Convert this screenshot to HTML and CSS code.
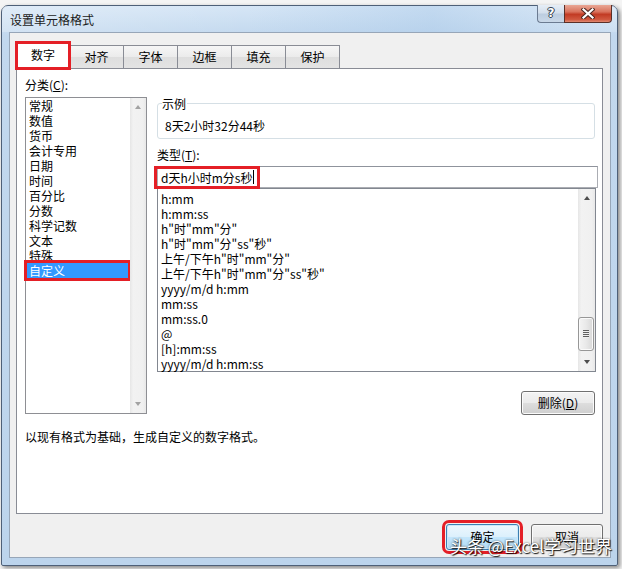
FILE: index.html
```html
<!DOCTYPE html>
<html lang="zh-CN">
<head>
<meta charset="utf-8">
<title>设置单元格格式</title>
<link rel="stylesheet" href="styles.css">
</head>
<body>
<div class="window">
  <div class="titlebar">
    <span class="title">设置单元格格式</span>
    <div class="caption-btns">
      <div class="btn-help">?</div>
      <div class="btn-close">
        <svg width="14" height="11" viewBox="0 0 14 11">
          <path d="M2.5 1.5 L11.5 9.5 M11.5 1.5 L2.5 9.5" stroke="#4a2620" stroke-width="4.2" stroke-linecap="square" fill="none"/>
          <path d="M2.5 1.5 L11.5 9.5 M11.5 1.5 L2.5 9.5" stroke="#ffffff" stroke-width="2.2" stroke-linecap="square" fill="none"/>
        </svg>
      </div>
    </div>
  </div>
  <div class="client">
    <div class="tabs">
      <div class="tab active">数字</div>
      <div class="tab">对齐</div>
      <div class="tab">字体</div>
      <div class="tab">边框</div>
      <div class="tab">填充</div>
      <div class="tab">保护</div>
    </div>
    <div class="panel">
      <div class="cols">
        <div class="left">
          <div class="label">分类(<u>C</u>):</div>
          <div class="listbox">
            <div class="items">
              <div class="item">常规</div>
              <div class="item">数值</div>
              <div class="item">货币</div>
              <div class="item">会计专用</div>
              <div class="item">日期</div>
              <div class="item">时间</div>
              <div class="item">百分比</div>
              <div class="item">分数</div>
              <div class="item">科学记数</div>
              <div class="item">文本</div>
              <div class="item">特殊</div>
              <div class="item sel">自定义</div>
            </div>
            <div class="vscroll narrow">
              <div class="sbtn"><span class="arrow up light"></span></div>
              <div class="track"></div>
              <div class="sbtn"><span class="arrow down light"></span></div>
            </div>
          </div>
        </div>
        <div class="right">
          <div class="group">
            <span class="legend">示例</span>
            <div class="sample">8天2小时32分44秒</div>
          </div>
          <div class="label type-label">类型(<u>T</u>):</div>
          <div class="input"><span class="mark">d天h小时m分s秒<i class="caret"></i></span></div>
          <div class="typelist">
            <div class="items pad">
              <div class="row">h:mm</div>
              <div class="row">h:mm:ss</div>
              <div class="row">h"时"mm"分"</div>
              <div class="row">h"时"mm"分"ss"秒"</div>
              <div class="row">上午/下午h"时"mm"分"</div>
              <div class="row">上午/下午h"时"mm"分"ss"秒"</div>
              <div class="row">yyyy/m/d h:mm</div>
              <div class="row">mm:ss</div>
              <div class="row">mm:ss.0</div>
              <div class="row">@</div>
              <div class="row">[h]:mm:ss</div>
              <div class="row">yyyy/m/d h:mm:ss</div>
            </div>
            <div class="vscroll wide">
              <div class="sbtn"><span class="arrow up"></span></div>
              <div class="track"></div>
              <div class="thumb"><span class="grip"></span></div>
              <div class="sbtn"><span class="arrow down"></span></div>
            </div>
          </div>
          <div class="del-row"><div class="btn">删除(<u>D</u>)</div></div>
        </div>
      </div>
      <div class="desc">以现有格式为基础，生成自定义的数字格式。</div>
    </div>
    <div class="actions">
      <div class="btn default">确定</div>
      <div class="btn">取消</div>
    </div>
  </div>
</div>
<div class="watermark">头条 @Excel学习世界</div>
</body>
</html>
```

FILE: styles.css
```css
* { box-sizing: border-box; }

html, body {
  margin: 0;
  padding: 0;
}

body {
  width: 622px;
  height: 569px;
  overflow: hidden;
  background: #f4f4f4;
  font-family: "Noto Sans CJK SC", "Microsoft YaHei", sans-serif;
  font-size: 12px;
  color: #000;
  position: relative;
  padding-top: 5px;
  padding-left: 1px;
}

.window {
  width: 617px;
  height: 561px;
  border: 1px solid #4e6078;
  border-radius: 7px 7px 2px 2px;
  background: linear-gradient(180deg, #d6e6f6 0px, #c2d8ee 30px, #bcd4ec 100%);
  box-shadow: 2px 2px 4px rgba(0, 0, 0, 0.45);
  display: flex;
  flex-direction: column;
}

.titlebar {
  height: 26px;
  display: flex;
  align-items: flex-start;
  padding-left: 8px;
  background: linear-gradient(90deg, rgba(255,255,255,0.25) 0, rgba(255,255,255,0) 40%, rgba(160,195,230,0.35) 70%, rgba(255,255,255,0.15) 100%);
}

.title {
  margin-top: 6px;
  line-height: 15px;
  font-size: 12px;
  color: #1b1b1b;
  flex: 1;
}

.caption-btns {
  display: flex;
  margin-top: -1px;
  margin-right: 5px;
  height: 18px;
}

.btn-help {
  width: 27px;
  height: 18px;
  border: 1px solid #6b7b91;
  border-top: none;
  border-right: none;
  border-radius: 0 0 0 4px;
  background: linear-gradient(180deg, #e6eef7 0%, #d3dfec 45%, #bccde0 55%, #c9d8e8 100%);
  color: #fff;
  font-family: "DejaVu Sans", sans-serif;
  font-weight: bold;
  font-size: 12px;
  line-height: 17px;
  text-align: center;
  text-shadow: 0 0 1px #2a3440, 1px 0 0 #3a4656, -1px 0 0 #3a4656, 0 1px 0 #3a4656, 0 -1px 0 #3a4656;
}

.btn-close {
  width: 48px;
  height: 18px;
  border: 1px solid #5a3028;
  border-top: none;
  border-radius: 0 0 4px 0;
  background: linear-gradient(180deg, #e9a795 0%, #d9735d 40%, #c23b24 55%, #d0583f 85%, #e08a72 100%);
  display: flex;
  align-items: center;
  justify-content: center;
}

.client {
  margin: 0 6px 7px 7px;
  width: 602px;
  height: 526px;
  border: 1px solid #97a6b8;
  background: #f0f0f0;
  padding: 9px 0 0 6px;
  display: flex;
  flex-direction: column;
}

.tabs {
  display: flex;
  align-items: flex-end;
  height: 27px;
  margin-bottom: -1px;
  position: relative;
  z-index: 1;
}

.tab {
  width: 54px;
  height: 23px;
  margin-bottom: 1px;
  border: 1px solid #898c95;
  border-bottom: none;
  border-left: none;
  background: linear-gradient(180deg, #f6f6f6 0%, #ebebeb 50%, #dedede 51%, #e3e3e3 100%);
  text-align: center;
  line-height: 22px;
}

.tab.active {
  height: 27px;
  margin-bottom: 0;
  border-left: 1px solid #898c95;
  background: #fff;
  line-height: 24px;
  outline: 3px solid #e41f26;
  outline-offset: -2px;
  position: relative;
  z-index: 2;
}

.panel {
  width: 587px;
  height: 446px;
  border: 1px solid #898c95;
  background: #fff;
  padding: 8px 0 0 8px;
}

.cols {
  display: flex;
  align-items: flex-start;
}

.label {
  line-height: 15px;
  height: 15px;
}

.label u, .btn u {
  text-decoration: underline;
  text-underline-offset: 1px;
}

.left {
  width: 122px;
}

.listbox {
  margin-top: 5px;
  height: 317px;
  border: 1px solid #8e8f94;
  display: flex;
}

.items {
  flex: 1;
  padding: 0 0 0 1px;
}

.item {
  width: 101px;
  line-height: 15px;
  height: 15px;
  padding-left: 2px;
}

.item.sel {
  background: #3399ff;
  color: #fff;
  outline: 3px solid #e41f26;
  outline-offset: 0;
}

.vscroll {
  display: flex;
  flex-direction: column;
  background: linear-gradient(90deg, #e6e6e6 0%, #f2f2f2 20%, #f0f0f0 80%, #e8e8e8 100%);
}

.vscroll.narrow { width: 16px; }
.vscroll.wide { width: 17px; }

.sbtn {
  height: 18px;
  display: flex;
  align-items: center;
  justify-content: center;
}

.track { flex: 1; }

.arrow {
  width: 0;
  height: 0;
  border-left: 3.5px solid transparent;
  border-right: 3.5px solid transparent;
}

.arrow.up { border-bottom: 4px solid #4d4d4d; }
.arrow.down { border-top: 4px solid #4d4d4d; }
.arrow.up.light { border-bottom-color: #a2a2a2; }
.arrow.down.light { border-top-color: #a2a2a2; }

.thumb {
  height: 34px;
  margin: 0 1px 2px 0;
  border: 1px solid #979797;
  border-radius: 3px;
  background: linear-gradient(90deg, #f4f4f4 0%, #e9e9e9 50%, #d8d8d8 100%);
  box-shadow: inset 0 0 0 1px #fafafa;
  display: flex;
  align-items: center;
  justify-content: center;
}

.grip {
  width: 6px;
  height: 8px;
  background: repeating-linear-gradient(180deg, #5f5f5f 0, #5f5f5f 1px, #efefef 1px, #efefef 2px, transparent 2px, transparent 2px);
}

.right {
  margin-left: 10px;
  width: 441px;
}

.group {
  position: relative;
  margin-top: 26px;
  width: 438px;
  height: 36px;
  border: 1px solid #d5dfe5;
  border-radius: 3px;
  padding: 14px 0 0 7px;
}

.legend {
  position: absolute;
  left: 4px;
  top: -8px;
  line-height: 15px;
  background: #fff;
  padding: 0 1px 0 0;
}

.sample {
  line-height: 15px;
}

.type-label {
  margin-top: 8px;
}

.input {
  margin-top: 4px;
  width: 441px;
  height: 22px;
  border: 1px solid #abadb3;
  border-top-color: #8f939c;
  display: flex;
  align-items: center;
}

.mark {
  display: flex;
  align-items: center;
  height: 17px;
  margin-left: -1px;
  padding: 0 3px 0 4px;
  line-height: 17px;
  outline: 3px solid #e41f26;
  outline-offset: 0;
}

.caret {
  display: inline-block;
  width: 1px;
  height: 14px;
  margin-left: 1px;
  background: #000;
}

.typelist {
  width: 439px;
  height: 184px;
  border: 1px solid #828790;
  display: flex;
}

.items.pad {
  padding: 2px 0 0 3px;
}

.row {
  line-height: 15px;
  height: 15px;
  white-space: nowrap;
}

.del-row {
  display: flex;
  justify-content: flex-end;
  margin-top: 19px;
  padding-right: 3px;
}

.btn {
  height: 24px;
  width: 74px;
  border: 1px solid #707070;
  border-radius: 3px;
  background: linear-gradient(180deg, #f3f3f3 0%, #ebebeb 48%, #dddddd 52%, #cfcfcf 100%);
  box-shadow: inset 0 0 0 1px #fbfbfb;
  text-align: center;
  line-height: 21px;
}

.desc {
  margin-top: 14px;
  line-height: 15px;
}

.actions {
  display: flex;
  justify-content: flex-end;
  gap: 12px;
  margin-top: 10px;
  padding-right: 7px;
}

.actions .btn {
  height: 26px;
  width: 72px;
  line-height: 23px;
}

.actions .btn.default {
  width: 73px;
  border-color: #3c7fb1;
  background: linear-gradient(180deg, #edf7fd 0%, #dcf0fc 48%, #c4e6fb 52%, #b1dbf5 100%);
  box-shadow: inset 0 0 0 1px #cbe8f9;
  outline: 3px solid #e41f26;
  outline-offset: 1px;
}

.watermark {
  position: absolute;
  left: 450px;
  top: 535px;
  font-size: 17px;
  line-height: 22px;
  color: #fff;
  white-space: nowrap;
  text-shadow: 1px 1px 1px rgba(0,0,0,0.9), 0 0 2px rgba(0,0,0,0.7);
}
```
